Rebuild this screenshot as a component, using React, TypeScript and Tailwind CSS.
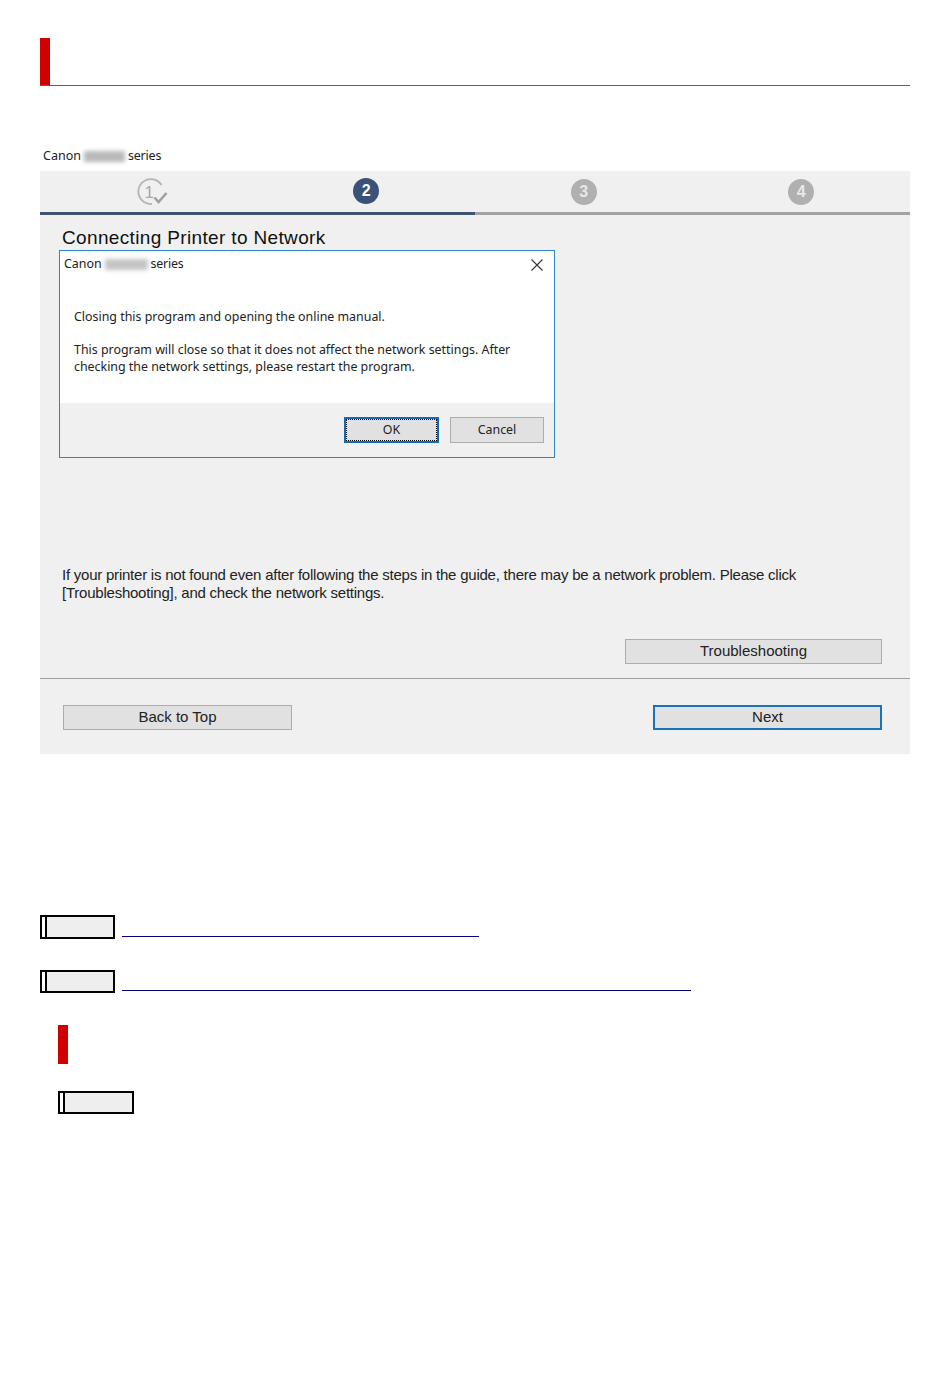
function NoteBox({ wide }: { wide?: boolean }) {
  return (
    <div className={`flex h-full shrink-0 border-2 border-black ${wide ? "w-[76px]" : "w-[75px]"}`}>
      <div className="w-[3px] bg-white" />
      <div className="flex-1 border-l-2 border-black bg-[#eeeeee]" />
    </div>
  );
}

function DoneStep() {
  return (
    <svg className="ml-[6px]" width="32" height="28" viewBox="0 0 32 28" fill="none">
      <path d="M25.5 7 A12.5 12.5 0 1 0 16 26" stroke="#b4b4b4" strokeWidth="1.8" />
      <text x="8.5" y="19.5" fontSize="17" fill="#a8a8a8" fontFamily="Liberation Sans, sans-serif">
        1
      </text>
      <path d="M18.5 19.5 L22.5 24 L30.5 15" stroke="#a0a0a0" strokeWidth="2.6" />
    </svg>
  );
}

function StepDot({ n, active }: { n: number; active?: boolean }) {
  return (
    <div
      className={`flex h-[26px] w-[26px] items-center justify-center rounded-full text-[16px] font-bold ${
        active ? "-mt-[2px] bg-[#3a5278] text-white" : "bg-[#b0b0b0] text-[#e8e8e8]"
      }`}
    >
      {n}
    </div>
  );
}

function WinButton({ label, className }: { label: string; className: string }) {
  return (
    <div className={`flex items-center justify-center bg-[#e1e1e1] text-[15px] text-[#222222] ${className}`}>
      {label}
    </div>
  );
}

export default function App() {
  return (
    <div className="h-[1397px] bg-white px-[40px] pt-[38px] font-['Liberation_Sans',sans-serif]">
      <div className="flex h-[48px] flex-col">
        <div className="h-[48px] w-[10px] bg-[#d00000]" />
        <div className="-mt-[1px] h-px bg-[#e02530]" />
      </div>

      <div className="mt-[60px] mb-[5px] flex h-[20px] items-center pt-[1px] pl-[3px] font-['Noto_Sans',sans-serif] text-[12.5px] text-[#222222]">
        <span>Canon</span>
        <div className="mx-[3px] h-[11px] w-[41px] bg-[#b8b8b8] blur-[2px]" />
        <span className="tracking-[-0.2px]">series</span>
      </div>

      <div className="h-[583px] bg-[#f0f0f0]">
        <div className="grid h-[41px] grid-cols-4 place-items-center">
          <DoneStep />
          <StepDot n={2} active />
          <StepDot n={3} />
          <StepDot n={4} />
        </div>
        <div className="flex h-[3px]">
          <div className="w-1/2 bg-[#3f5475]" />
          <div className="w-1/2 bg-[#a3a3a3]" />
        </div>

        <h1 className="h-[35px] pt-[11px] pl-[22px] text-[19px] leading-[24px] tracking-[0.35px] text-[#111111]">
          Connecting Printer to Network
        </h1>

        <div className="ml-[19px] flex h-[208px] w-[496px] flex-col border border-[#2e87c4] font-['Noto_Sans',sans-serif] text-[12.4px] text-[#222222]">
          <div className="h-[152px] bg-white">
            <div className="flex h-[26px] items-center pt-[1px] pr-[10px] pl-[4px]">
              <span>Canon</span>
              <div className="mx-[3px] h-[11px] w-[43px] bg-[#c4c4c4] blur-[2px]" />
              <span className="tracking-[-0.2px]">series</span>
              <svg className="ml-auto" width="14" height="14" viewBox="0 0 14 14" stroke="#333333" strokeWidth="1.1">
                <path d="M1.5 1.5 L12.5 12.5 M12.5 1.5 L1.5 12.5" />
              </svg>
            </div>
            <div className="mt-[31px] pl-[14px] leading-[17px]">
              <p>Closing this program and opening the online manual.</p>
              <p className="mt-[16px]">
                This program will close so that it does not affect the network settings. After
                <br />
                checking the network settings, please restart the program.
              </p>
            </div>
          </div>
          <div className="flex flex-1 justify-end gap-[11px] pt-[14px] pr-[10px]">
            <div className="flex h-[26px] w-[95px] items-center justify-center border-2 border-[#0f6cb8] bg-[#e1e1e1] pt-[1px] outline-1 outline-offset-[-3px] outline-black outline-dotted">
              OK
            </div>
            <div className="flex h-[26px] w-[94px] items-center justify-center border border-[#adadad] bg-[#e1e1e1] pt-[1px]">
              Cancel
            </div>
          </div>
        </div>

        <p className="mt-[108px] pl-[22px] text-[15px] leading-[18px] tracking-[-0.23px] text-[#222222]">
          If your printer is not found even after following the steps in the guide, there may be a network problem. Please click
          <br />
          [Troubleshooting], and check the network settings.
        </p>

        <div className="mt-[37px] flex justify-end pr-[28px]">
          <WinButton label="Troubleshooting" className="h-[25px] w-[257px] border border-[#adadad]" />
        </div>

        <div className="mt-[14px] h-px bg-[#a0a0a0]" />

        <div className="mt-[26px] flex justify-between pr-[28px] pl-[23px]">
          <WinButton label="Back to Top" className="h-[25px] w-[229px] border border-[#adadad]" />
          <WinButton label="Next" className="h-[25px] w-[229px] border-2 border-[#1a73b8]" />
        </div>
      </div>

      <div className="mt-[161px] flex h-[24px] items-end">
        <NoteBox />
        <div className="mb-[2px] ml-[7px] w-[357px] border-b border-[#000080]" />
      </div>

      <div className="mt-[31px] flex h-[23px] items-end">
        <NoteBox />
        <div className="mb-[2px] ml-[7px] w-[569px] border-b border-[#000080]" />
      </div>

      <div className="mt-[32px] ml-[18px] h-[39px] w-[10px] bg-[#d00000]" />

      <div className="mt-[27px] ml-[18px] h-[23px]">
        <NoteBox wide />
      </div>
    </div>
  );
}
